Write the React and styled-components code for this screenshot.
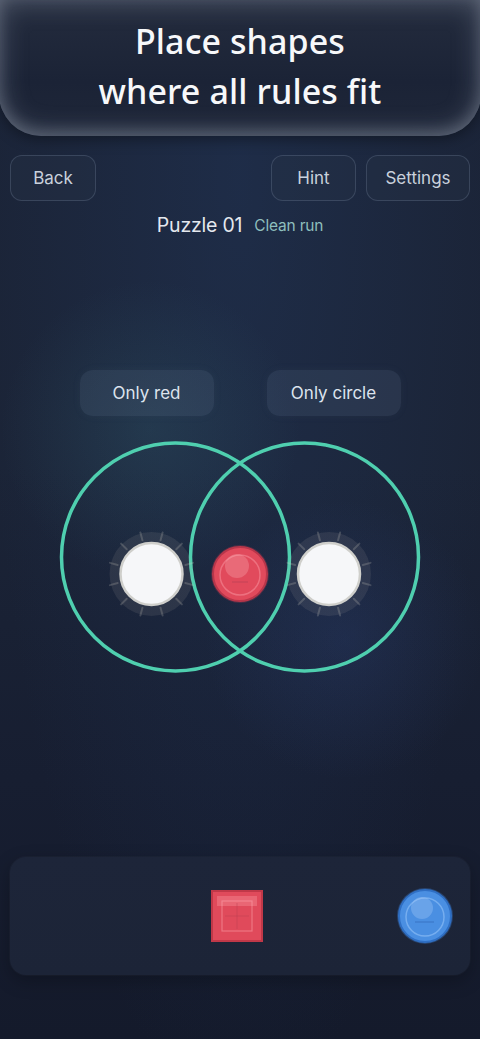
import React from "react";
import styled, { createGlobalStyle } from "styled-components";

const Global = createGlobalStyle`
  html, body { margin: 0; padding: 0; }
  body {
    background: #161d2e;
    font-family: "Inter", "Noto Sans", sans-serif;
    -webkit-font-smoothing: antialiased;
  }
  #root { min-height: 1039px; }
`;

const Page = styled.div`
  position: relative;
  width: 480px;
  min-height: 1039px;
  display: flex;
  flex-direction: column;
  overflow: hidden;
  background:
    radial-gradient(circle at 150px 430px, rgba(70, 140, 150, 0.16), transparent 150px),
    radial-gradient(circle at 345px 640px, rgba(60, 90, 170, 0.16), transparent 140px),
    radial-gradient(ellipse at 240px 170px, rgba(40, 70, 120, 0.25), transparent 260px),
    linear-gradient(180deg, #1b2438 0%, #1b2437 45%, #171e31 75%, #141a2b 100%);
`;

const Banner = styled.header`
  height: 136px;
  margin: 0 -1px;
  border-radius: 0 0 42px 42px;
  background: linear-gradient(180deg, #242c3e 0%, #1b2336 60%, #1f2739 100%);
  box-shadow:
    inset 0 0 28px rgba(190, 200, 215, 0.34),
    inset 0 -6px 14px rgba(190, 200, 215, 0.18),
    0 4px 14px rgba(0, 0, 0, 0.35);
  display: flex;
  align-items: center;
  justify-content: center;
`;

const Title = styled.h1`
  margin: 0;
  padding-bottom: 4px;
  font-family: "Noto Sans", sans-serif;
  font-weight: 500;
  font-size: 34px;
  line-height: 50px;
  letter-spacing: 0.1px;
  color: #f7f8fa;
  text-align: center;
`;

const Toolbar = styled.nav`
  margin-top: 19px;
  padding: 0 10px 0 10px;
  display: flex;
  gap: 10px;
`;

const Spacer = styled.div`
  flex: 1;
`;

const Button = styled.button`
  height: 46px;
  width: ${(p) => p.$w}px;
  border-radius: 12px;
  border: 1px solid rgba(160, 180, 205, 0.2);
  background: rgba(40, 52, 72, 0.35);
  color: #c9d1dc;
  font-family: "Inter", sans-serif;
  font-size: 17px;
  font-weight: 400;
  padding: 0;
`;

const PuzzleRow = styled.div`
  margin-top: 11px;
  height: 26px;
  display: flex;
  align-items: center;
  justify-content: center;
  gap: 12px;
`;

const PuzzleName = styled.span`
  font-size: 19.5px;
  color: #e4e8ee;
  letter-spacing: -0.2px;
`;

const Status = styled.span`
  font-size: 15.5px;
  color: #8ebfbd;
  letter-spacing: -0.2px;
`;

const Rules = styled.div`
  margin-top: 132px;
  display: flex;
  justify-content: center;
  gap: 53px;
`;

const RuleLabel = styled.div`
  width: 134px;
  height: 46px;
  border-radius: 13px;
  background: rgba(120, 140, 170, 0.14);
  box-shadow: 0 0 10px rgba(120, 140, 170, 0.06);
  display: flex;
  align-items: center;
  justify-content: center;
  color: #dde4ee;
  font-size: 17px;
`;

const Board = styled.svg`
  display: block;
  margin-top: 16px;
  width: 480px;
  height: 260px;
`;

const Tray = styled.div`
  margin: auto 10px 64px 10px;
  height: 118px;
  border-radius: 16px;
  background: linear-gradient(180deg, #1d2539 0%, #1c2437 100%);
  box-shadow: 0 0 0 1px rgba(255, 255, 255, 0.025), 0 6px 18px rgba(0, 0, 0, 0.25);
  display: flex;
  align-items: center;
  padding-left: 201px;
`;

const TraySlot = styled.svg`
  display: block;
  flex: none;
  margin-left: ${(p) => p.$ml || 0}px;
`;

function Halo({ cx, cy }) {
  const ticks = [];
  for (let i = 0; i < 12; i++) {
    const a = ((i * 30 + 15) * Math.PI) / 180;
    ticks.push(
      <line
        key={i}
        x1={cx + Math.cos(a) * 35}
        y1={cy + Math.sin(a) * 35}
        x2={cx + Math.cos(a) * 43}
        y2={cy + Math.sin(a) * 43}
        stroke="rgba(225,222,205,0.2)"
        strokeWidth="2"
        strokeLinecap="round"
      />
    );
  }
  return (
    <g>
      <circle cx={cx} cy={cy} r="42" fill="rgba(205,200,185,0.1)" />
      {ticks}
    </g>
  );
}

function WhitePiece({ cx, cy }) {
  return (
    <g>
      <Halo cx={cx} cy={cy} />
      <circle cx={cx} cy={cy} r="31" fill="#f6f7f9" stroke="#cfcfcb" strokeWidth="2.5" />
    </g>
  );
}

function RedCircle({ cx, cy, r = 27 }) {
  return (
    <g>
      <circle cx={cx} cy={cy} r={r + 2} fill="rgba(230,70,90,0.22)" />
      <circle cx={cx} cy={cy} r={r} fill="#e14a5c" stroke="#b8364a" strokeWidth="2" />
      <circle cx={cx} cy={cy + 1} r={r - 7} fill="none" stroke="rgba(255,170,180,0.4)" strokeWidth="1.5" />
      <circle cx={cx - 3} cy={cy - 8} r={r - 15} fill="rgba(255,190,195,0.28)" />
      <line x1={cx - 8} y1={cy + 8} x2={cx + 8} y2={cy + 8} stroke="rgba(170,60,80,0.5)" strokeWidth="1" />
    </g>
  );
}

function BlueCircle() {
  return (
    <TraySlot width="58" height="58" viewBox="0 0 58 58" $ml={133}>
      <circle cx="29" cy="29" r="28" fill="rgba(70,140,230,0.3)" />
      <circle cx="29" cy="29" r="26" fill="#4a8fe2" stroke="#2f6fc4" strokeWidth="2" />
      <circle cx="29" cy="30" r="19" fill="none" stroke="rgba(170,210,255,0.45)" strokeWidth="1.5" />
      <circle cx="26" cy="21" r="11" fill="rgba(170,205,250,0.32)" />
      <line x1="19" y1="35" x2="38" y2="35" stroke="rgba(40,90,170,0.5)" strokeWidth="1" />
    </TraySlot>
  );
}

function RedSquare() {
  return (
    <TraySlot width="52" height="52" viewBox="0 0 52 52">
      <rect x="1" y="1" width="50" height="50" fill="#e04a5b" stroke="#c03848" strokeWidth="2" />
      <rect x="6" y="6" width="40" height="10" fill="rgba(255,170,175,0.3)" />
      <rect x="11" y="11" width="30" height="30" fill="none" stroke="rgba(255,170,180,0.45)" strokeWidth="1.2" />
      <line x1="26" y1="13" x2="26" y2="39" stroke="rgba(180,60,80,0.4)" strokeWidth="1" />
      <line x1="14" y1="26" x2="38" y2="26" stroke="rgba(180,60,80,0.4)" strokeWidth="1" />
    </TraySlot>
  );
}

export default function App() {
  return (
    <>
      <Global />
      <Page>
        <Banner>
          <Title>
            Place shapes
            <br />
            where all rules fit
          </Title>
        </Banner>

        <Toolbar>
          <Button $w={86}>Back</Button>
          <Spacer />
          <Button $w={85}>Hint</Button>
          <Button $w={104}>Settings</Button>
        </Toolbar>

        <PuzzleRow>
          <PuzzleName>Puzzle 01</PuzzleName>
          <Status>Clean run</Status>
        </PuzzleRow>

        <Rules>
          <RuleLabel>Only red</RuleLabel>
          <RuleLabel>Only circle</RuleLabel>
        </Rules>

        <Board viewBox="0 0 480 260">
          <circle cx="175.5" cy="125" r="114" fill="none" stroke="#4fcfaf" strokeWidth="3.5" />
          <circle cx="304.5" cy="125" r="114" fill="none" stroke="#4fcfaf" strokeWidth="3.5" />
          <WhitePiece cx={151.5} cy={142} />
          <WhitePiece cx={329} cy={142} />
          <RedCircle cx={240} cy={142} />
        </Board>

        <Tray>
          <RedSquare />
          <BlueCircle />
        </Tray>
      </Page>
    </>
  );
}
